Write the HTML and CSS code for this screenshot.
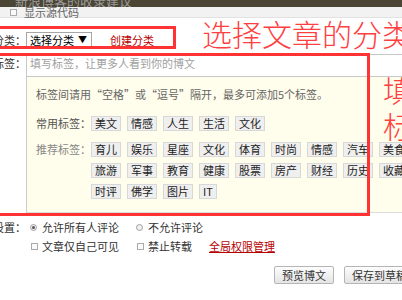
FILE: index.html
```html
<!DOCTYPE html>
<html lang="zh-CN">

<head>
    <meta charset="UTF-8">
    <meta name="viewport" content="width=device-width, initial-scale=1.0">
    <title>发博文</title>
    <link rel="stylesheet" href="styles.css">
</head>

<body>
    <div class="page">
        <div class="topbar"><span>新浪博客的收录建议</span></div>
        <div class="srcbar"><span class="chk"></span>显示源代码</div>

        <div class="form">
            <div class="row row-cat">
                <span class="label">分类：</span>
                <span class="select">选择分类<i>▼</i></span>
                <a class="link">创建分类</a>
            </div>

            <div class="row row-tag">
                <span class="label">标签：</span>
                <div class="tag-field">
                    <div class="tag-input">填写标签，让更多人看到你的博文</div>
                    <div class="tag-panel">
                        <p class="tip">标签间请用“空格”或“逗号”隔开，最多可添加5个标签。</p>
                        <div class="tag-line common">
                            <span class="tag-label">常用标签：</span>
                            <div class="tags">
                                <span class="tag">美文</span>
                                <span class="tag">情感</span>
                                <span class="tag">人生</span>
                                <span class="tag">生活</span>
                                <span class="tag">文化</span>
                            </div>
                        </div>
                        <div class="tag-line recommend">
                            <span class="tag-label">推荐标签：</span>
                            <div class="tags">
                                <span class="tag">育儿</span>
                                <span class="tag">娱乐</span>
                                <span class="tag">星座</span>
                                <span class="tag">文化</span>
                                <span class="tag">体育</span>
                                <span class="tag">时尚</span>
                                <span class="tag">情感</span>
                                <span class="tag">汽车</span>
                                <span class="tag">美食</span>
                                <span class="tag">旅游</span>
                                <span class="tag">军事</span>
                                <span class="tag">教育</span>
                                <span class="tag">健康</span>
                                <span class="tag">股票</span>
                                <span class="tag">房产</span>
                                <span class="tag">财经</span>
                                <span class="tag">历史</span>
                                <span class="tag">收藏</span>
                                <span class="tag">时评</span>
                                <span class="tag">佛学</span>
                                <span class="tag">图片</span>
                                <span class="tag">IT</span>
                            </div>
                        </div>
                    </div>
                </div>
            </div>

            <div class="row row-set">
                <span class="label">设置：</span>
                <div class="options">
                    <span class="opt col1"><span class="radio on"></span>允许所有人评论</span>
                    <span class="opt col2"><span class="radio"></span>不允许评论</span>
                    <span class="opt col1"><span class="chk"></span>文章仅自己可见</span>
                    <span class="opt col2"><span class="chk"></span>禁止转载</span>
                    <a class="link">全局权限管理</a>
                </div>
            </div>

            <div class="actions">
                <button>预览博文</button>
                <button>保存到草稿箱</button>
            </div>
        </div>

        <!-- 标注 -->
        <div class="mark box1"></div>
        <div class="mark box2"></div>
        <div class="note note1">选择文章的分类</div>
        <div class="note note2">填写<br>标签</div>
    </div>
</body>

</html>
```

FILE: styles.css
```css
body {
    margin: 0;
    font-family: "Noto Sans CJK SC", "Liberation Sans", sans-serif;
    font-size: 11px;
    color: #333;
    background: #fff;
    overflow: hidden;
}

.page {
    position: relative;
    width: 402px;
    height: 300px;
    overflow: hidden;
}

.topbar {
    height: 7px;
    overflow: hidden;
    background: #4a4534;
    color: #9b9b9b;
    font-size: 13px;
    line-height: 13px;
    padding-left: 15px;
}

.topbar span {
    display: block;
    margin-top: -6px;
}

.srcbar {
    display: flex;
    align-items: center;
    gap: 7px;
    height: 10px;
    padding-left: 10px;
    background: #f2f2f2;
    border-bottom: 1px solid #e2e2e2;
    color: #666;
    line-height: 10px;
}

.chk {
    display: inline-block;
    width: 5px;
    height: 5px;
    border: 1px solid #aaa;
    background: #fafafa;
    flex: none;
}

.form {
    display: flex;
    flex-direction: column;
    margin-left: -7px;
}

.row {
    display: flex;
}

.label {
    flex: none;
    width: 33px;
    text-align: right;
    color: #333;
}

.link {
    color: #b80000;
    text-decoration: underline;
}

/* 分类 */
.row-cat {
    align-items: center;
    margin-top: 14px;
    height: 16px;
}

.select {
    box-sizing: border-box;
    display: flex;
    align-items: center;
    justify-content: space-between;
    width: 66px;
    height: 16px;
    padding: 0 4px 0 3px;
    border: 1px solid #a6a6a6;
    color: #000;
    line-height: 14px;
}

.select i {
    font-style: normal;
    font-size: 9px;
}

.row-cat .link {
    margin-left: 18px;
}

/* 标签 */
.row-tag {
    margin-top: 6px;
}

.row-tag .label {
    padding-top: 2px;
    line-height: 14px;
}

.tag-field {
    width: 420px;
    flex: none;
}

.tag-input {
    box-sizing: border-box;
    height: 23px;
    padding: 1px 3px;
    border: 1px solid #c8c8c8;
    border-right: none;
    color: #a0a0a0;
    line-height: 14px;
}

.tag-panel {
    background: #fffdeb;
    border-left: 1px solid #ccc;
    border-bottom: 1px solid #ddd;
    padding: 10px 0 13px 9px;
}

.tip {
    margin: 0;
    line-height: 14px;
    color: #666;
}

.tag-line {
    display: flex;
    align-items: flex-start;
}

.tag-line.common {
    margin-top: 15px;
}

.tag-line.recommend {
    margin-top: 11px;
}

.tag-label {
    flex: none;
    width: 55px;
    line-height: 15px;
    color: #555;
}

.recommend .tag-label {
    color: #888;
}

.tags {
    display: flex;
    flex-wrap: wrap;
    gap: 6px 6px;
    width: 330px;
}

.tag {
    padding: 0 3px;
    line-height: 13px;
    border: 1px solid #d8d8d8;
    background: #efefef;
    color: #222;
}

/* 设置 */
.row-set {
    margin-top: 7px;
}

.row-set .label {
    line-height: 15px;
}

.options {
    display: flex;
    flex-wrap: wrap;
    row-gap: 4px;
    width: 260px;
    padding-left: 4px;
    line-height: 15px;
}

.opt {
    display: flex;
    align-items: center;
    gap: 5px;
}

.opt .chk {
    margin-left: 1px;
    margin-right: -1px;
}

.col1 {
    width: 106px;
}

.col2 {
    width: 73px;
}

.radio {
    box-sizing: border-box;
    display: inline-flex;
    align-items: center;
    justify-content: center;
    width: 7px;
    height: 7px;
    border: 1px solid #a0a0a0;
    border-radius: 50%;
    background: #f0f0f0;
}

.radio.on::after {
    content: "";
    width: 3px;
    height: 3px;
    border-radius: 50%;
    background: #555;
}

/* 按钮 */
.actions {
    display: flex;
    gap: 10px;
    margin-top: 12px;
    margin-left: 281px;
}

button {
    flex: none;
    height: 18px;
    padding: 0 7px;
    font-family: inherit;
    font-size: 11px;
    line-height: 16px;
    color: #333;
    background: linear-gradient(#fdfdfd, #e4e4e4);
    border: 1px solid #b5b5b5;
    border-radius: 2px;
}

/* 红色标注 */
.mark {
    position: absolute;
    box-sizing: border-box;
    border: 3px solid #ff3333;
}

.box1 {
    left: -10px;
    top: 26px;
    width: 186px;
    height: 23px;
}

.box2 {
    left: -10px;
    top: 53px;
    width: 380px;
    height: 163px;
}

.note {
    position: absolute;
    font-size: 30px;
    font-weight: 300;
    color: #ff4040;
    white-space: nowrap;
}

.note1 {
    left: 202px;
    top: 17px;
    line-height: 32px;
}

.note2 {
    left: 383px;
    top: 71px;
    line-height: 36px;
}
```
